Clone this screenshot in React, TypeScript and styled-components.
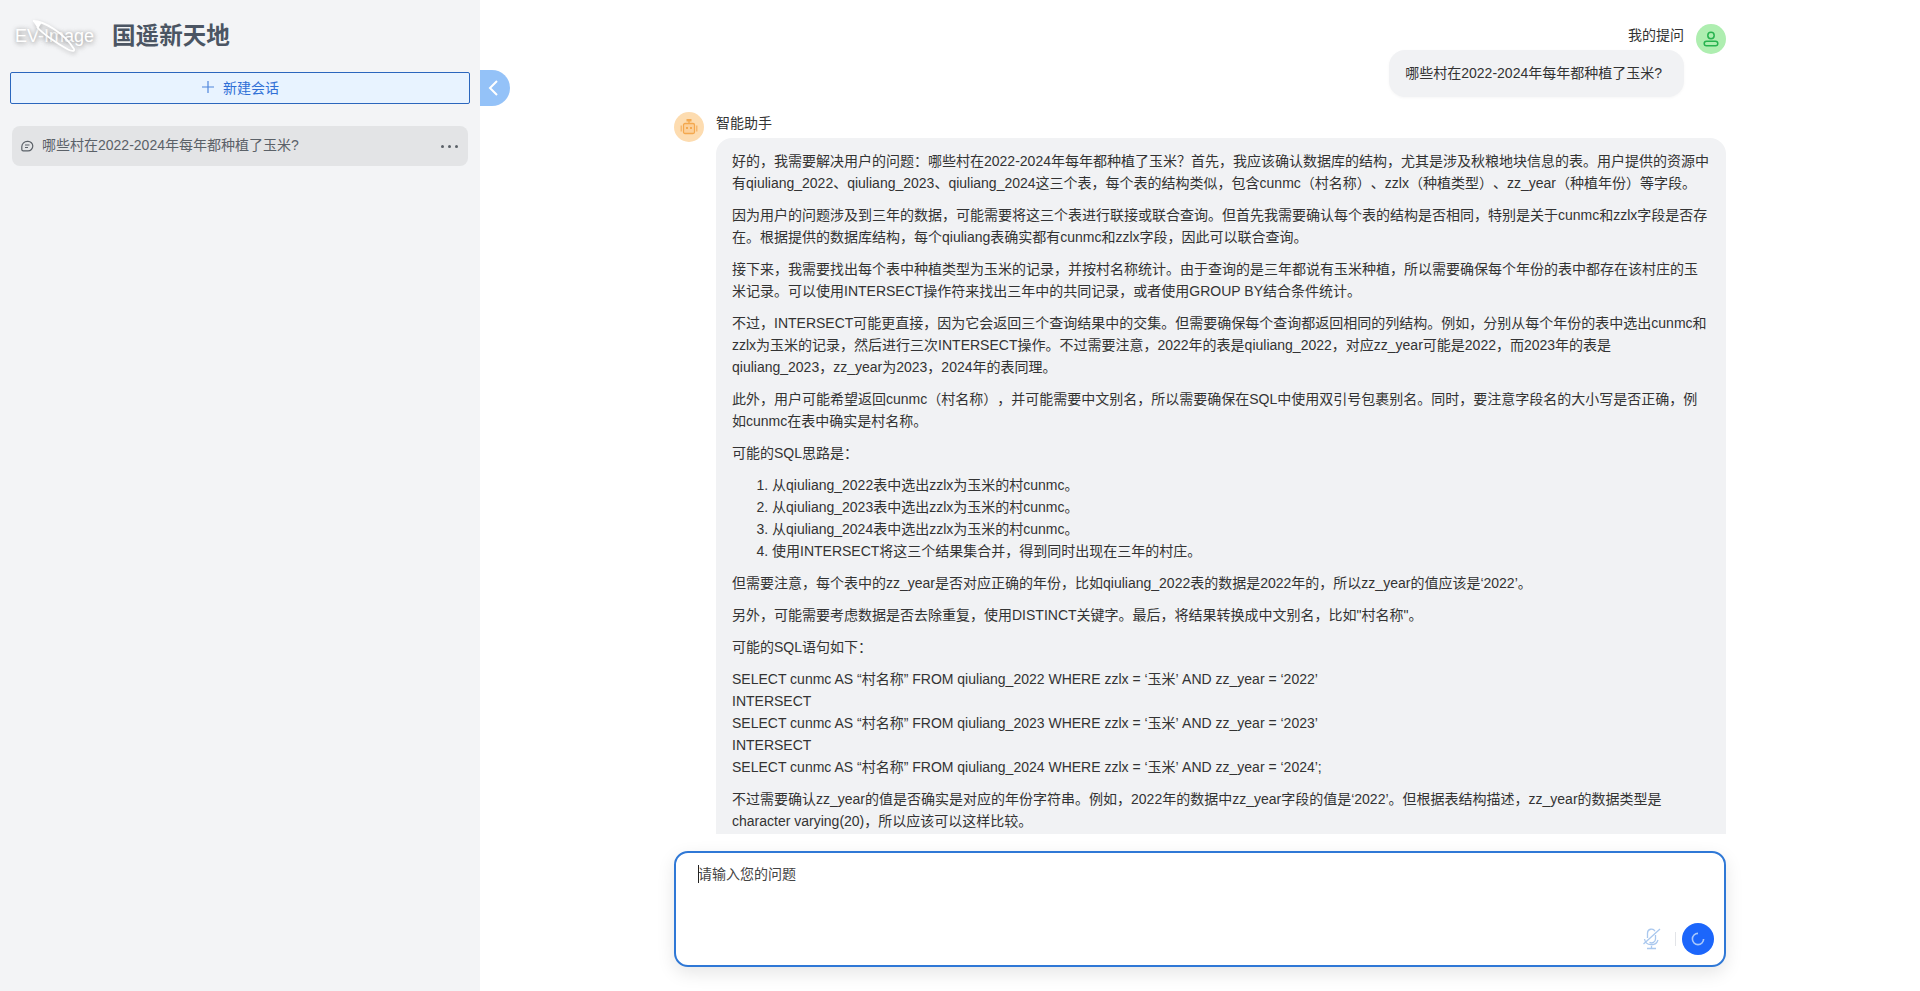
import React from "react";
import styled, { createGlobalStyle } from "styled-components";

const Global = createGlobalStyle`
  html, body { margin: 0; padding: 0; height: 100%; background: #fff; overflow: hidden; }
  #root { height: 100%; }
  * { box-sizing: border-box; }
  body { font-family: "Liberation Sans", "Noto Sans CJK SC", sans-serif; font-size: 14px; color: #1f2937; text-spacing-trim: space-all; }
`;

const Page = styled.div`
  display: flex;
  height: 991px;
  width: 1920px;
`;
const Sidebar = styled.aside`
  position: relative;
  width: 480px;
  flex: none;
  background: #f3f4f6;
  padding: 0 10px;
`;
const Brand = styled.div`
  display: flex;
  align-items: center;
  height: 72px;
`;
const LogoBox = styled.div`
  position: relative;
  width: 92px;
  height: 36px;
  flex: none;
  margin-right: 10px;
`;
const LogoText = styled.span`
  position: absolute;
  left: 5px;
  top: 8px;
  font-size: 18px;
  line-height: 20px;
  color: #fff;
  white-space: nowrap;
  text-shadow: 0 0 4px rgba(110,110,110,.5), 1px 2px 5px rgba(110,110,110,.4);
`;
const LogoSwoosh = styled.svg`
  position: absolute;
  left: 20px;
  top: 0;
  width: 50px;
  height: 36px;
  filter: drop-shadow(1px 2px 2px rgba(100,100,100,.4));
`;
const Title = styled.h1`
  margin: 0;
  font-size: 23.6px;
  line-height: 32px;
  font-weight: 700;
  color: #4b5563;
`;
const NewChat = styled.button`
  display: flex;
  align-items: center;
  justify-content: center;
  gap: 8px;
  width: 460px;
  height: 32px;
  background: #e8f3ff;
  border: 1px solid #2b66bd;
  border-radius: 2px;
  color: #2f6fd6;
  font: inherit;
  padding: 0 0 2px;
`;
const ConvItem = styled.div`
  display: flex;
  align-items: center;
  height: 40px;
  margin: 22px 2px 0;
  padding: 0 9px 0 8px;
  background: #e3e4e6;
  border-radius: 8px;
  color: #5b6168;
`;
const ConvIcon = styled.svg`
  width: 14px;
  height: 14px;
  flex: none;
  margin-right: 8px;
`;
const ConvLabel = styled.span`
  flex: 1;
  font-size: 14px;
  line-height: 20px;
  padding-bottom: 3px;
`;
const More = styled.span`
  display: flex;
  gap: 4px;
  margin-right: 1px;
`;
const Dot = styled.i`
  width: 3px;
  height: 3px;
  border-radius: 50%;
  background: #5b6168;
`;
const Toggle = styled.button`
  position: absolute;
  left: 100%;
  top: 70px;
  width: 30px;
  height: 36px;
  padding: 0 4px 0 0;
  display: flex;
  align-items: center;
  justify-content: center;
  background: #94c2f8;
  border: 0;
  border-radius: 0 18px 18px 0;
`;
const Main = styled.main`
  flex: 1;
  min-width: 0;
  display: flex;
  flex-direction: column;
  align-items: center;
`;
const Column = styled.div`
  width: 1052px;
  flex: 1;
  min-height: 0;
  display: flex;
  flex-direction: column;
`;
const Messages = styled.div`
  height: 834px;
  overflow: hidden;
  padding-top: 24px;
  flex: none;
`;
const UserRow = styled.div`
  display: flex;
  justify-content: flex-end;
  gap: 12px;
`;
const UserBody = styled.div`
  display: flex;
  flex-direction: column;
  align-items: flex-end;
`;
const Name = styled.div`
  font-size: 14px;
  line-height: 22px;
  color: #333;
`;
const UserBubble = styled.div`
  margin-top: 4px;
  height: 47px;
  line-height: 47px;
  padding: 0 22px 0 16px;
  background: #f1f2f4;
  border-radius: 16px;
  box-shadow: 0 1px 3px rgba(0,0,0,.04);
  color: #333;
`;
const Avatar = styled.div<{ $bg: string }>`
  width: 30px;
  height: 30px;
  flex: none;
  border-radius: 50%;
  background: ${p => p.$bg};
  display: flex;
  align-items: center;
  justify-content: center;
`;
const BotRow = styled.div`
  display: flex;
  gap: 12px;
  margin-top: 15px;
`;
const BotBody = styled.div`
  flex: 1;
  min-width: 0;
`;
const BotName = styled(Name)`
  line-height: 20px;
  margin-top: 1px;
  margin-bottom: 5px;
`;
const BotBubble = styled.div`
  background: #f1f2f4;
  border-radius: 16px;
  padding: 12px 16px;
  color: #333;
  line-height: 22px;
`;
const Para = styled.p`
  margin: 0 0 10px;
`;
const Steps = styled.ol`
  margin: 0 0 10px;
  padding-left: 40px;
`;
const Code = styled.div`
  margin-bottom: 10px;
`;
const InputBox = styled.div`
  position: relative;
  margin-top: 17px;
  height: 116px;
  background: #fff;
  border: 2px solid #2f78d6;
  border-radius: 14px;
  box-shadow: 0 6px 18px rgba(0,0,0,.1);
  padding: 11px 22px;
`;
const Placeholder = styled.div`
  line-height: 20px;
  color: #444;
  border: 0;
  position: relative;
`;
const Caret = styled.i`
  position: absolute;
  left: 0;
  top: 1px;
  width: 1px;
  height: 18px;
  background: #222;
`;
const Actions = styled.div`
  position: absolute;
  right: 10px;
  bottom: 10px;
  display: flex;
  align-items: center;
`;
const Divider = styled.i`
  width: 1px;
  height: 14px;
  background: #e2e4e8;
  margin: 0 6px 0 14px;
`;
const Send = styled.button`
  width: 32px;
  height: 32px;
  padding: 0;
  border: 0;
  border-radius: 50%;
  background: #1c66fb;
  display: flex;
  align-items: center;
  justify-content: center;
`;

export default function App() {
  return (
    <Page>
      <Global />
      <Sidebar>
        <Brand>
          <LogoBox>
            <LogoText>EV-Image</LogoText>
            <LogoSwoosh viewBox="0 0 50 36" fill="none">
              <path d="M3 3 C14 3 34 15 44 31 C45 34 41 33 38 31.500 C26 25 12 15 7 9" stroke="#fff" strokeWidth="1.800" />
              <path d="M3 3 L12 4 L8 11 Z" fill="#fff" />
            </LogoSwoosh>
          </LogoBox>
          <Title>国遥新天地</Title>
        </Brand>
        <NewChat>
          <svg width="14" height="14" viewBox="0 0 14 14"><path d="M7 1v12M1 7h12" stroke="#4f86dc" strokeWidth="1.2" /></svg>
          新建会话
        </NewChat>
        <ConvItem>
          <ConvIcon viewBox="0 0 14 14" fill="none" stroke="#5b6168" strokeWidth="1.2">
            <path d="M7.500 1.500h.5a4.800 4.800 0 0 1 0 9.600H3.200a1.400 1.400 0 0 1-1.400-1.400V7A5.500 5.500 0 0 1 7.500 1.500Z" transform="translate(0 .8)" />
            <path d="M5 6h4.500M5 8.500h3" />
          </ConvIcon>
          <ConvLabel>哪些村在2022-2024年每年都种植了玉米?</ConvLabel>
          <More><Dot /><Dot /><Dot /></More>
        </ConvItem>
        <Toggle aria-label="收起">
          <svg width="12" height="18" viewBox="0 0 12 18" fill="none"><path d="M10 2 3 9l7 7" stroke="#fff" strokeWidth="2" /></svg>
        </Toggle>
      </Sidebar>
      <Main>
        <Column>
          <Messages>
            <UserRow>
              <UserBody>
                <Name>我的提问</Name>
                <UserBubble>哪些村在2022-2024年每年都种植了玉米?</UserBubble>
              </UserBody>
              <Avatar $bg="#aeeeb0">
                <svg width="18" height="18" viewBox="0 0 18 18" fill="none" stroke="#27b34f" strokeWidth="1.5">
                  <circle cx="9" cy="5.500" r="3.200" />
                  <rect x="2.200" y="11.200" width="13.600" height="4.600" rx="2.300" />
                </svg>
              </Avatar>
            </UserRow>
            <BotRow>
              <Avatar $bg="#fddcb0">
                <svg width="22" height="22" viewBox="0 0 22 22" fill="none">
                  <rect x="5.500" y="7.500" width="11" height="10" rx="1.500" fill="#fcd09a" stroke="#f4a84e" strokeWidth="1.300" />
                  <path d="M11 7.500V4.500" stroke="#f4a84e" strokeWidth="1.300" />
                  <rect x="8.500" y="3" width="5" height="2.500" fill="#f4a84e" />
                  <rect x="2.500" y="9.500" width="1.500" height="6" fill="#f7b76c" />
                  <rect x="18" y="9.500" width="1.500" height="6" fill="#f7b76c" />
                  <rect x="8" y="11" width="2" height="2" fill="#f4a84e" />
                  <rect x="12" y="11" width="2" height="2" fill="#f4a84e" />
                </svg>
              </Avatar>
              <BotBody>
                <BotName>智能助手</BotName>
                <BotBubble>
                  <Para>好的，我需要解决用户的问题：哪些村在2022-2024年每年都种植了玉米？首先，我应该确认数据库的结构，尤其是涉及秋粮地块信息的表。用户提供的资源中有qiuliang_2022、qiuliang_2023、qiuliang_2024这三个表，每个表的结构类似，包含cunmc（村名称）、zzlx（种植类型）、zz_year（种植年份）等字段。</Para>
                  <Para>因为用户的问题涉及到三年的数据，可能需要将这三个表进行联接或联合查询。但首先我需要确认每个表的结构是否相同，特别是关于cunmc和zzlx字段是否存在。根据提供的数据库结构，每个qiuliang表确实都有cunmc和zzlx字段，因此可以联合查询。</Para>
                  <Para>接下来，我需要找出每个表中种植类型为玉米的记录，并按村名称统计。由于查询的是三年都说有玉米种植，所以需要确保每个年份的表中都存在该村庄的玉米记录。可以使用INTERSECT操作符来找出三年中的共同记录，或者使用GROUP BY结合条件统计。</Para>
                  <Para>不过，INTERSECT可能更直接，因为它会返回三个查询结果中的交集。但需要确保每个查询都返回相同的列结构。例如，分别从每个年份的表中选出cunmc和zzlx为玉米的记录，然后进行三次INTERSECT操作。不过需要注意，2022年的表是qiuliang_2022，对应zz_year可能是2022，而2023年的表是qiuliang_2023，zz_year为2023，2024年的表同理。</Para>
                  <Para>此外，用户可能希望返回cunmc（村名称），并可能需要中文别名，所以需要确保在SQL中使用双引号包裹别名。同时，要注意字段名的大小写是否正确，例如cunmc在表中确实是村名称。</Para>
                  <Para>可能的SQL思路是：</Para>
                  <Steps>
                    <li>从qiuliang_2022表中选出zzlx为玉米的村cunmc。</li>
                    <li>从qiuliang_2023表中选出zzlx为玉米的村cunmc。</li>
                    <li>从qiuliang_2024表中选出zzlx为玉米的村cunmc。</li>
                    <li>使用INTERSECT将这三个结果集合并，得到同时出现在三年的村庄。</li>
                  </Steps>
                  <Para>但需要注意，每个表中的zz_year是否对应正确的年份，比如qiuliang_2022表的数据是2022年的，所以zz_year的值应该是‘2022’。</Para>
                  <Para>另外，可能需要考虑数据是否去除重复，使用DISTINCT关键字。最后，将结果转换成中文别名，比如"村名称"。</Para>
                  <Para>可能的SQL语句如下：</Para>
                  <Code>
                    <div>SELECT cunmc AS “村名称” FROM qiuliang_2022 WHERE zzlx = ‘玉米’ AND zz_year = ‘2022’</div>
                    <div>INTERSECT</div>
                    <div>SELECT cunmc AS “村名称” FROM qiuliang_2023 WHERE zzlx = ‘玉米’ AND zz_year = ‘2023’</div>
                    <div>INTERSECT</div>
                    <div>SELECT cunmc AS “村名称” FROM qiuliang_2024 WHERE zzlx = ‘玉米’ AND zz_year = ‘2024’;</div>
                  </Code>
                  <Para>不过需要确认zz_year的值是否确实是对应的年份字符串。例如，2022年的数据中zz_year字段的值是‘2022’。但根据表结构描述，zz_year的数据类型是character varying(20)，所以应该可以这样比较。</Para>
                </BotBubble>
              </BotBody>
            </BotRow>
          </Messages>
          <InputBox>
            <Placeholder><Caret />请输入您的问题</Placeholder>
            <Actions>
              <svg width="20" height="22" viewBox="0 0 20 22" fill="none" stroke="#aac8ee" strokeWidth="1.300">
                <path d="M6.500 10V5a4 4 0 0 1 7.500-1.800M14.500 7v4a4 4 0 0 1-6 3.400" />
                <path d="M3.500 11a7 7 0 0 0 13.500 1M10.500 18V20.500M6 20.500h9M19 1 2.500 16" />
              </svg>
              <Divider />
              <Send aria-label="发送">
                <svg width="14" height="14" viewBox="0 0 14 14" fill="none"><path d="M12.600 7A5.600 5.600 0 1 1 7 1.400" stroke="#a9c8fb" strokeWidth="1.600" /></svg>
              </Send>
            </Actions>
          </InputBox>
        </Column>
      </Main>
    </Page>
  );
}
